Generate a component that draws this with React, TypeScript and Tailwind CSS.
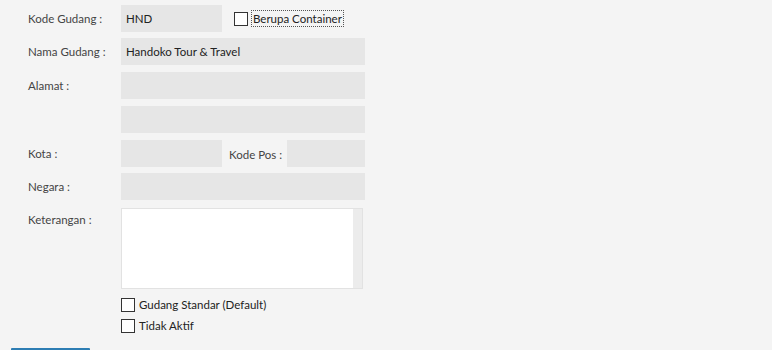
export default function App() {
  const label = "w-[93px] shrink-0 text-[11.5px] text-[#444]";
  const field = "h-[27px] bg-[#e6e6e6] px-[5px] flex items-center text-[11.5px] text-[#222]";
  return (
    <div
      className="relative w-[772px] h-[350px] overflow-hidden bg-[#f4f4f4] pl-[28px] pt-[5px]"
      style={{ fontFamily: 'Lato, "Open Sans", sans-serif' }}
    >
      <div className="h-[27px] flex items-center">
        <div className={label}>Kode Gudang :</div>
        <div className={field + " w-[101px]"}>HND</div>
        <label className="ml-[12px] flex items-center text-[11.5px] text-[#222]">
          <span className="w-[14px] h-[14px] border-[1.5px] border-[#333] bg-white" />
          <span className="ml-[3px] px-[1px] border border-dotted border-[#555] leading-[15px]">Berupa Container</span>
        </label>
      </div>
      <div className="mt-[6px] h-[27px] flex items-center">
        <div className={label}>Nama Gudang :</div>
        <div className={field + " w-[244px]"}>Handoko Tour &amp; Travel</div>
      </div>
      <div className="mt-[7px] h-[27px] flex items-center">
        <div className={label}>Alamat :</div>
        <div className={field + " w-[244px]"} />
      </div>
      <div className="mt-[7px] h-[27px] flex items-center">
        <div className={label} />
        <div className={field + " w-[244px]"} />
      </div>
      <div className="mt-[7px] h-[27px] flex items-center">
        <div className={label}>Kota :</div>
        <div className={field + " w-[101px]"} />
        <div className="w-[65px] pl-[7px] pt-[3px] whitespace-nowrap text-[11.5px] text-[#444]">Kode Pos :</div>
        <div className={field + " w-[78px]"} />
      </div>
      <div className="mt-[6px] h-[27px] flex items-center">
        <div className={label}>Negara :</div>
        <div className={field + " w-[244px]"} />
      </div>
      <div className="mt-[8px] flex items-start">
        <div className={label + " pt-[3px]"}>Keterangan :</div>
        <div className="w-[242px] h-[81px] border border-[#e2e2e2] flex">
          <div className="flex-1 bg-white" />
          <div className="w-[9px] bg-[#ececec]" />
        </div>
      </div>
      <div className="ml-[93px] mt-[9px] flex flex-col gap-[7px]">
        <label className="h-[14px] flex items-center text-[11.5px] text-[#222]">
          <span className="w-[14px] h-[14px] border-[1.5px] border-[#333] bg-white" />
          <span className="ml-[4px]">Gudang Standar (Default)</span>
        </label>
        <label className="h-[14px] flex items-center text-[11.5px] text-[#222]">
          <span className="w-[14px] h-[14px] border-[1.5px] border-[#333] bg-white" />
          <span className="ml-[4px]">Tidak Aktif</span>
        </label>
      </div>
      <div className="absolute left-[11px] top-[348px] w-[79px] h-[10px] bg-[#2d7db3] rounded-t-[1px]" />
    </div>
  );
}
